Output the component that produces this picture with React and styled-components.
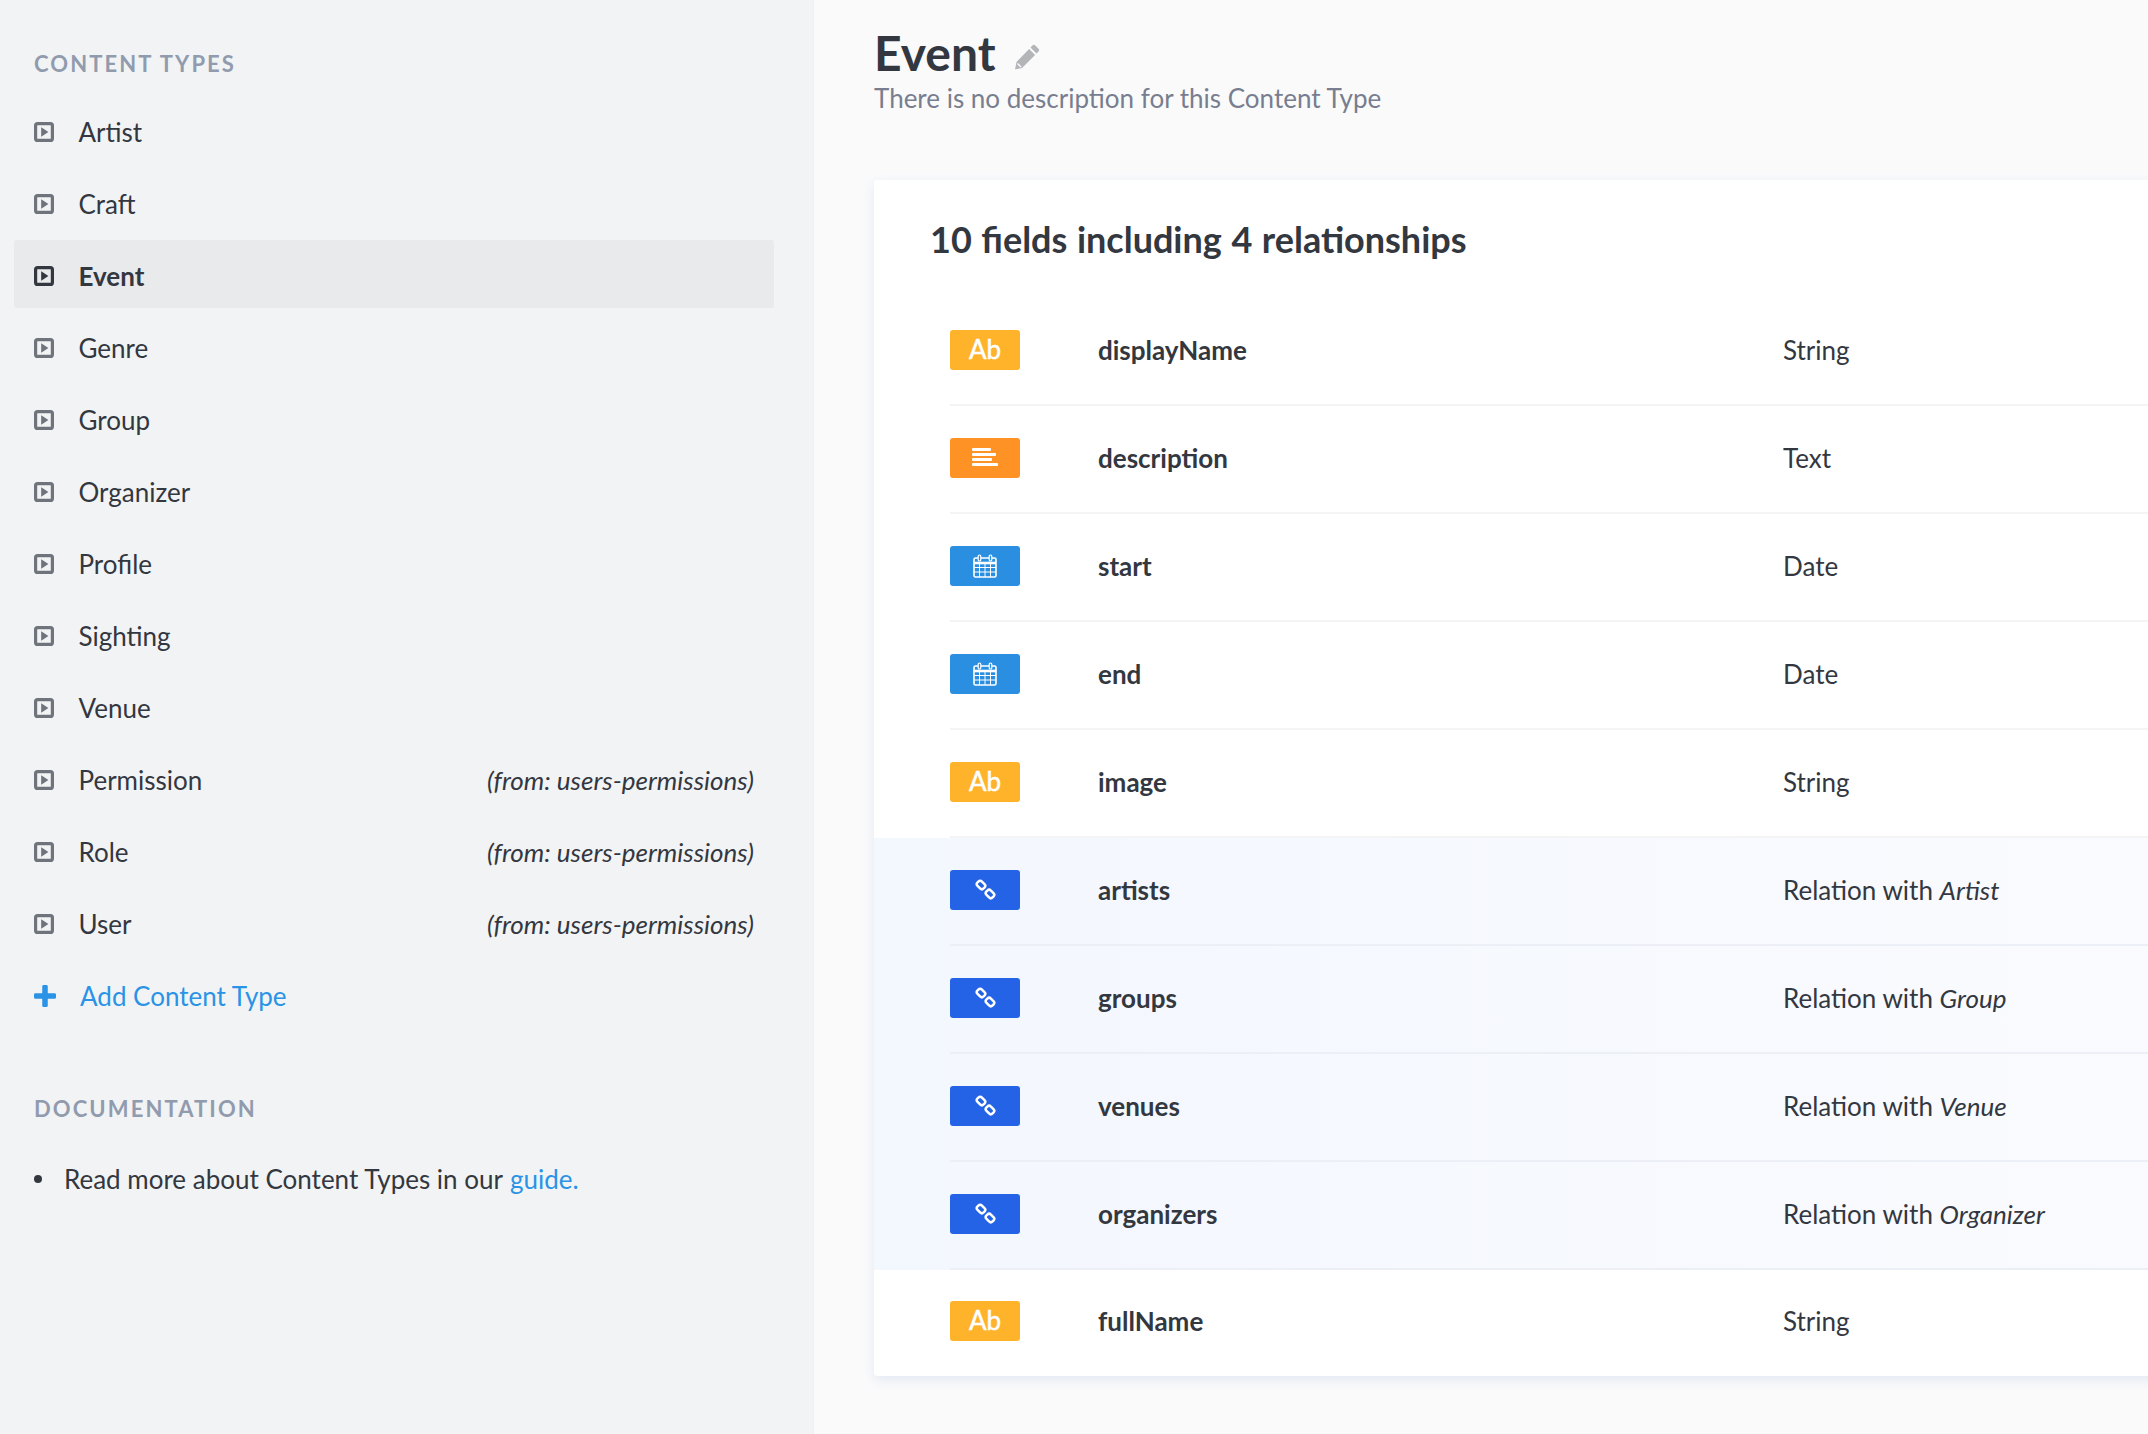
import React from 'react';
import styled, { createGlobalStyle } from 'styled-components';

const Global = createGlobalStyle`
  html, body {
    margin: 0;
    padding: 0;
    height: 100%;
    overflow: hidden;
    background: #fafafb;
  }
  * {
    box-sizing: border-box;
  }
`;

const Page = styled.div`
  display: flex;
  width: 2148px;
  height: 1434px;
  overflow: hidden;
  font-family: Lato, "Liberation Sans", sans-serif;
  color: #333740;
`;

const Side = styled.aside`
  flex: 0 0 814px;
  background: #f2f3f4;
  border-right: 1px solid #eef0f2;
  padding: 51px 39px 0 14px;
`;

const SideTitle = styled.h3`
  margin: 0;
  padding-left: 20px;
  font-size: 22px;
  line-height: 26px;
  font-weight: 700;
  letter-spacing: 2.1px;
  color: #919bae;
  text-transform: uppercase;
`;

const Menu = styled.ul`
  list-style: none;
  margin: 19px 0 0;
  padding: 0;
  display: flex;
  flex-direction: column;
  gap: 4px;
`;

const Item = styled.li`
  display: flex;
  align-items: center;
  height: 68px;
  padding: 4px 20px 0;
  border-radius: 3px;
  font-size: 26px;
  font-weight: ${p => (p.$active ? 700 : 400)};
  color: #333740;
  background: ${p => (p.$active ? '#e9eaeb' : 'transparent')};
`;

const ItemIcon = styled.svg`
  flex: 0 0 20px;
  width: 20px;
  height: 20px;
  margin-right: 24.5px;
  color: ${p => (p.$active ? '#333740' : '#6f737b')};
`;

const Source = styled.span`
  margin-left: auto;
  font-style: italic;
`;

const AddItem = styled(Item)`
  color: #2a93e6;
`;

const Plus = styled.svg`
  flex: 0 0 22px;
  width: 22px;
  height: 22px;
  margin-right: 24px;
  color: #2a93e6;
`;

const DocTitle = styled(SideTitle)`
  margin-top: 68px;
`;

const DocList = styled.ul`
  list-style: none;
  margin: 40px 0 0;
  padding: 0 0 0 20px;
`;

const DocItem = styled.li`
  display: flex;
  align-items: center;
  font-size: 26px;
  line-height: 34px;
  &::before {
    content: '';
    width: 8px;
    height: 8px;
    margin-right: 22px;
    border-radius: 50%;
    background: #333740;
  }
`;

const DocLink = styled.a`
  color: #2a93e6;
  margin-left: 7px;
`;

const Main = styled.main`
  flex: 1;
  min-width: 0;
  padding: 24px 0 0 60px;
`;

const TitleRow = styled.div`
  display: flex;
  align-items: center;
`;

const Title = styled.h1`
  margin: 0;
  font-size: 48px;
  line-height: 58px;
  font-weight: 700;
  color: #333740;
`;

const Pencil = styled.svg`
  width: 26px;
  height: 26px;
  margin: 8px 0 0 18px;
  color: #b3b5b9;
`;

const Sub = styled.p`
  margin: 0;
  font-size: 26px;
  line-height: 33px;
  color: #787e8f;
`;

const Card = styled.section`
  margin-top: 65px;
  width: 1400px;
  background: #fff;
  border-radius: 3px;
  box-shadow: 0 4px 12px #e3e9f3;
`;

const CardTitle = styled.h2`
  margin: 0;
  padding: 37px 0 0 56px;
  height: 118px;
  font-size: 36px;
  line-height: 44px;
  font-weight: 700;
  word-spacing: 0.8px;
`;

const Rows = styled.div`
  display: flex;
  flex-direction: column;
`;

const Row = styled.div`
  padding-left: 76px;
  background: ${p => (p.$rel ? 'linear-gradient(to right, #f3f7fe, #fafbfe)' : 'transparent')};
`;

const RowInner = styled.div`
  display: grid;
  grid-template-columns: 148px 685px 1fr;
  align-items: center;
  height: ${p => (p.$last ? '106px' : '108px')};
  padding-bottom: 3px;
  border-bottom: 2px solid ${p => (p.$last ? 'transparent' : p.$rel ? '#eceff6' : '#f4f4f5')};
  font-size: 26px;
`;

const Badge = styled.div`
  display: flex;
  align-items: center;
  justify-content: center;
  width: 70px;
  height: 40px;
  padding-bottom: ${p => (p.$text ? '2px' : '0')};
  border-radius: 3px;
  color: #fff;
  background: ${p => p.$color};
  font-size: 26px;
  font-weight: 400;
  -webkit-text-stroke: 0.5px #fff;
`;

const Name = styled.span`
  font-weight: 700;
  color: #333740;
`;

const Kind = styled.span`
  color: #333740;
`;

const PlayIcon = ({ active }) => (
  <ItemIcon $active={active} viewBox="0 0 20 20">
    <rect x="1.6" y="1.6" width="16.800" height="16.800" rx="2" fill="none" stroke="currentColor" strokeWidth="3.200" />
    <path d="M7.200 5.200v9.600l7.200-4.800z" fill="currentColor" />
  </ItemIcon>
);

const TextIcon = () => (
  <svg width="26" height="20" viewBox="0 0 26 20" fill="#fff">
    <rect y="0" width="19" height="3" rx="1" />
    <rect y="5" width="24" height="3" rx="1" />
    <rect y="10" width="20" height="3" rx="1" />
    <rect y="15" width="26" height="3" rx="1" />
  </svg>
);

const CalendarIcon = () => (
  <svg width="24" height="24" viewBox="0 0 24 24" fill="none" stroke="#fff">
    <rect x="1" y="4" width="22" height="19" rx="1.5" strokeWidth="1.6" />
    <path d="M1 9h22" strokeWidth="2.6" />
    <path d="M1 13.500h22M1 18h22M6.500 9v14M12 9v14M17.500 9v14" strokeWidth="1" />
    <rect x="5.200" y="1" width="2.600" height="6" rx="1.300" fill="#2a8fe0" strokeWidth="1.200" />
    <rect x="16.200" y="1" width="2.600" height="6" rx="1.300" fill="#2a8fe0" strokeWidth="1.200" />
  </svg>
);

const LinkIcon = () => (
  <svg width="21" height="21" viewBox="0 0 22 22" fill="none" stroke="#fff" strokeWidth="2.600">
    <rect x="1.800" y="3.050" width="9" height="6.500" rx="2.600" transform="rotate(45 6.300 6.300)" />
    <rect x="11.200" y="12.450" width="9" height="6.500" rx="2.600" transform="rotate(45 15.700 15.700)" />
  </svg>
);

const contentTypes = [
  { name: 'Artist' },
  { name: 'Craft' },
  { name: 'Event', active: true },
  { name: 'Genre' },
  { name: 'Group' },
  { name: 'Organizer' },
  { name: 'Profile' },
  { name: 'Sighting' },
  { name: 'Venue' },
  { name: 'Permission', source: '(from: users-permissions)' },
  { name: 'Role', source: '(from: users-permissions)' },
  { name: 'User', source: '(from: users-permissions)' },
];

const fields = [
  { name: 'displayName', type: 'string', kind: 'String' },
  { name: 'description', type: 'text', kind: 'Text' },
  { name: 'start', type: 'date', kind: 'Date' },
  { name: 'end', type: 'date', kind: 'Date' },
  { name: 'image', type: 'string', kind: 'String' },
  { name: 'artists', type: 'relation', target: 'Artist' },
  { name: 'groups', type: 'relation', target: 'Group' },
  { name: 'venues', type: 'relation', target: 'Venue' },
  { name: 'organizers', type: 'relation', target: 'Organizer' },
  { name: 'fullName', type: 'string', kind: 'String' },
];

const badges = {
  string: { color: '#ffb32b', content: 'Ab' },
  text: { color: '#ff9225', content: <TextIcon /> },
  date: { color: '#2a8fe0', content: <CalendarIcon /> },
  relation: { color: '#2563e6', content: <LinkIcon /> },
};

const App = () => (
  <Page>
    <Global />
    <Side>
      <SideTitle>Content Types</SideTitle>
      <Menu>
        {contentTypes.map(item => (
          <Item key={item.name} $active={item.active}>
            <PlayIcon active={item.active} />
            {item.name}
            {item.source && <Source>{item.source}</Source>}
          </Item>
        ))}
        <AddItem>
          <Plus viewBox="0 0 24 24">
            <path d="M9 1.500a1.500 1.500 0 0 1 1.500-1.500h3A1.500 1.500 0 0 1 15 1.500V9h7.500A1.500 1.500 0 0 1 24 10.500v3a1.500 1.500 0 0 1-1.500 1.500H15v7.500a1.500 1.500 0 0 1-1.500 1.500h-3A1.500 1.500 0 0 1 9 22.500V15H1.500A1.500 1.500 0 0 1 0 13.500v-3A1.500 1.500 0 0 1 1.500 9H9z" fill="currentColor" />
          </Plus>
          Add Content Type
        </AddItem>
      </Menu>
      <DocTitle>Documentation</DocTitle>
      <DocList>
        <DocItem>
          Read more about Content Types in our <DocLink>guide.</DocLink>
        </DocItem>
      </DocList>
    </Side>
    <Main>
      <TitleRow>
        <Title>Event</Title>
        <Pencil viewBox="0 0 26 26">
          <path d="M18.500 1.500a2 2 0 0 1 2.800 0l3.200 3.200a2 2 0 0 1 0 2.800l-2 2-6-6zM15.100 4.900l6 6L8 24l-7 1.500L2.500 18z" fill="currentColor" />
          <path d="M3.500 19.500l3.500 3.500" stroke="#fafafb" strokeWidth="1.500" />
        </Pencil>
      </TitleRow>
      <Sub>There is no description for this Content Type</Sub>
      <Card>
        <CardTitle>10 fields including 4 relationships</CardTitle>
        <Rows>
          {fields.map((field, index) => {
            const rel = field.type === 'relation';
            const badge = badges[field.type];
            return (
              <Row key={field.name} $rel={rel}>
                <RowInner $rel={rel} $last={index === fields.length - 1}>
                  <Badge $color={badge.color} $text={field.type === 'string'}>{badge.content}</Badge>
                  <Name>{field.name}</Name>
                  <Kind>
                    {rel ? <>Relation with <i>{field.target}</i></> : field.kind}
                  </Kind>
                </RowInner>
              </Row>
            );
          })}
        </Rows>
      </Card>
    </Main>
  </Page>
);

export default App;
